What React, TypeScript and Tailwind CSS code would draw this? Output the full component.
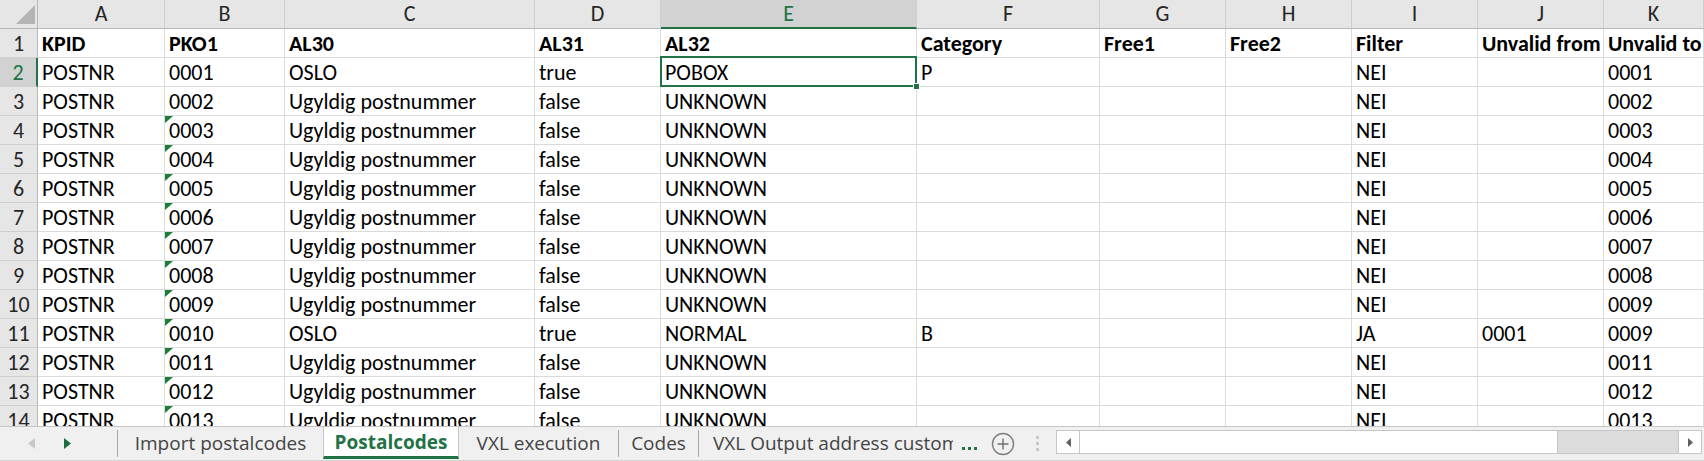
import React from 'react';

const letters = ['A', 'B', 'C', 'D', 'E', 'F', 'G', 'H', 'I', 'J', 'K'];

const pad = (n: number) => n.toString().padStart(4, '0');

const invalidRow = (n: number) => [
  'POSTNR', pad(n), 'Ugyldig postnummer', 'false', 'UNKNOWN', '', '', '', 'NEI', '', pad(n),
];

const rows: string[][] = [
  ['KPID', 'PKO1', 'AL30', 'AL31', 'AL32', 'Category', 'Free1', 'Free2', 'Filter', 'Unvalid from', 'Unvalid to'],
  ['POSTNR', '0001', 'OSLO', 'true', 'POBOX', 'P', '', '', 'NEI', '', '0001'],
  invalidRow(2),
  invalidRow(3),
  invalidRow(4),
  invalidRow(5),
  invalidRow(6),
  invalidRow(7),
  invalidRow(8),
  invalidRow(9),
  ['POSTNR', '0010', 'OSLO', 'true', 'NORMAL', 'B', '', '', 'JA', '0001', '0009'],
  invalidRow(11),
  invalidRow(12),
  invalidRow(13),
];

function Sep() {
  return <div className="my-[3px] w-px self-stretch bg-[#a6a6a6]" />;
}

function ErrorMark() {
  // little green triangle excel puts on "number stored as text"
  return (
    <svg className="absolute left-0 top-0" width="8" height="7">
      <polygon points="0,0 8,0 0,7" fill="#1b7d38" />
    </svg>
  );
}

export default function App() {
  return (
    <div className="h-[461px] w-[1704px] overflow-hidden bg-white font-[Carlito,Lato,sans-serif] text-[22px] text-black">
      {/* Sheet grid */}
      <div className="h-[426px] overflow-hidden">
        <div className="grid grid-cols-[38px_127px_120px_250px_126px_256px_183px_126px_126px_126px_126px_100px]">
          {/* corner */}
          <div className="relative h-[29px] border-b border-r border-[#b7b7b7] bg-[#e6e6e6]">
            <svg className="absolute left-0 top-0" width="38" height="29">
              <polygon points="35,5 35,24 16,24" fill="#b4b4b4" />
            </svg>
          </div>
          {letters.map((l) => (
            <div
              key={l}
              className={
                l === 'E'
                  ? 'h-[29px] border-b-2 border-r border-b-[#217346] border-r-[#cfcfcf] bg-[#d2d2d2] text-center leading-[28px] text-[#217346]'
                  : 'h-[29px] border-b border-r border-b-[#b7b7b7] border-r-[#cfcfcf] bg-[#e6e6e6] text-center leading-[28px] text-[#262626]'
              }
            >
              {l}
            </div>
          ))}

          {rows.map((row, ri) => (
            <React.Fragment key={ri}>
              <div
                className={
                  ri === 1
                    ? 'h-[29px] border-b border-r-2 border-b-[#cfcfcf] border-r-[#217346] bg-[#d2d2d2] pt-px text-center leading-[27px] text-[#217346]'
                    : 'h-[29px] border-b border-r border-b-[#cfcfcf] border-r-[#b7b7b7] bg-[#e6e6e6] pt-px text-center leading-[27px] text-[#262626]'
                }
              >
                {ri + 1}
              </div>
              {row.map((val, ci) => (
                <div key={ci} className="relative h-[29px] border-b border-r border-[#dadada] bg-white">
                  {ci === 1 && ri >= 3 && <ErrorMark />}
                  <div
                    className={
                      ri === 0
                        ? 'overflow-hidden whitespace-nowrap pl-[4px] pt-px font-bold leading-[27px]'
                        : 'overflow-hidden whitespace-nowrap pl-[4px] pt-px leading-[27px]'
                    }
                  >
                    {val}
                  </div>
                  {ri === 1 && ci === 4 && (
                    <>
                      <div className="absolute -bottom-[1px] -left-[1px] -right-[1px] -top-[2px] z-10 border-2 border-[#217346]" />
                      <div className="absolute -bottom-[4px] -right-[4px] z-20 h-[7px] w-[7px] border border-white bg-[#217346]" />
                    </>
                  )}
                </div>
              ))}
            </React.Fragment>
          ))}
        </div>
      </div>

      {/* Sheet tabs + horizontal scrollbar */}
      <div className="flex h-[35px] border-b border-t border-b-[#d4d4d4] border-t-[#c6c6c6] bg-[#f0f0f0] font-['Open_Sans',sans-serif] text-[19px] text-[#444444]">
        <div className="flex w-[117px] items-center gap-[29px] pl-[28px]">
          <svg width="7" height="11">
            <polygon points="7,0 7,11 0,5.5" fill="#c8c8c8" />
          </svg>
          <svg width="7" height="11">
            <polygon points="0,0 0,11 7,5.5" fill="#1d6b3e" />
          </svg>
        </div>
        <Sep />
        <div className="flex w-[205px] items-center justify-center whitespace-nowrap">Import postalcodes</div>
        <div className="flex h-[32px] w-[136px] items-center justify-center whitespace-nowrap border-x border-b-[3px] border-x-[#c6c6c6] border-b-[#217346] bg-white pt-[2px] font-bold text-[#217346]">
          Postalcodes
        </div>
        <div className="flex w-[159px] items-center justify-center whitespace-nowrap">VXL execution</div>
        <Sep />
        <div className="flex w-[79px] items-center justify-center">Codes</div>
        <Sep />
        <div className="flex w-[254px] items-center overflow-hidden whitespace-nowrap pl-[14px]">
          VXL Output address customer
        </div>
        <div className="flex w-[32px] items-end gap-[3px] pb-[10px] pl-[9px]">
          <span className="h-[3px] w-[3px] bg-[#217346]" />
          <span className="h-[3px] w-[3px] bg-[#217346]" />
          <span className="h-[3px] w-[3px] bg-[#217346]" />
        </div>
        <div className="flex w-[36px] items-center justify-center">
          <svg width="24" height="24" viewBox="0 0 24 24">
            <circle cx="12" cy="12" r="10.5" fill="none" stroke="#7f7f7f" strokeWidth="1.4" />
            <path d="M12 6.5v11M6.5 12h11" stroke="#6f6f6f" strokeWidth="1.4" />
          </svg>
        </div>
        <div className="flex w-[32px] flex-col items-center justify-center gap-[3px]">
          <span className="h-[3px] w-[3px] bg-[#c8c8c8]" />
          <span className="h-[3px] w-[3px] bg-[#c8c8c8]" />
          <span className="h-[3px] w-[3px] bg-[#c8c8c8]" />
        </div>
        <div className="ml-[3px] mt-[3px] flex h-[24px] w-[646px] border border-[#c6c6c6] bg-white">
          <div className="flex w-[23px] items-center justify-center border-r border-[#c6c6c6]">
            <svg width="5" height="9">
              <polygon points="5,0 5,9 0,4.5" fill="#606060" />
            </svg>
          </div>
          <div className="w-[478px] border-r border-[#c6c6c6]" />
          <div className="flex-1 bg-[#dcdcdc]" />
          <div className="flex w-[23px] items-center justify-center border-l border-[#c6c6c6]">
            <svg width="5" height="9">
              <polygon points="0,0 0,9 5,4.5" fill="#606060" />
            </svg>
          </div>
        </div>
      </div>
    </div>
  );
}
